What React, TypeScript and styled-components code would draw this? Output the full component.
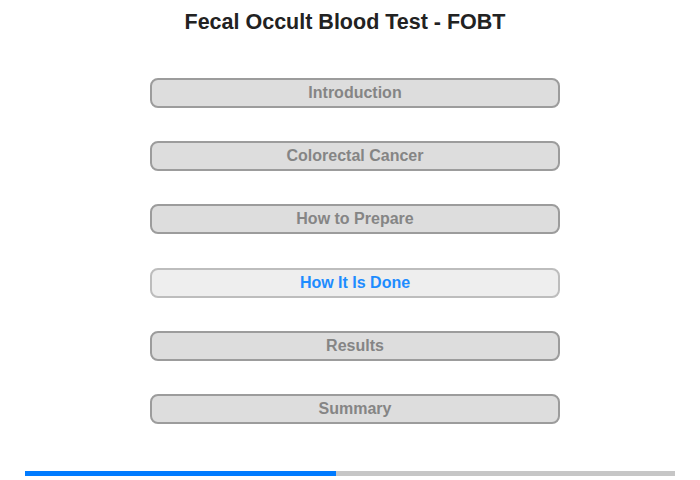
import React from 'react';
import styled, { createGlobalStyle } from 'styled-components';

const GlobalStyle = createGlobalStyle`
  html, body {
    margin: 0;
    padding: 0;
    background: #fff;
    font-family: "Liberation Sans", Arial, sans-serif;
  }
`;

const Page = styled.div`
  width: 700px;
  height: 480px;
  display: flex;
  flex-direction: column;
  align-items: center;
`;

const Title = styled.h1`
  margin: 9px 10px 0 0;
  height: 26px;
  font-size: 21.5px;
  line-height: 26px;
  font-weight: bold;
  color: #222;
`;

const Menu = styled.nav`
  margin: 43px 0 0 10px;
  display: flex;
  flex-direction: column;
  gap: 33.2px;
`;

const MenuButton = styled.div<{ $active?: boolean }>`
  box-sizing: border-box;
  width: 410px;
  height: 30px;
  border: 2px solid ${(p) => (p.$active ? '#bdbdbd' : '#9c9c9c')};
  border-radius: 8px;
  background: ${(p) => (p.$active ? '#eeeeee' : '#dddddd')};
  color: ${(p) => (p.$active ? '#1e8cff' : '#858585')};
  font-size: 16px;
  font-weight: bold;
  display: flex;
  align-items: center;
  justify-content: center;
  cursor: pointer;
`;

const Progress = styled.div`
  margin-top: auto;
  margin-bottom: 4px;
  width: 650px;
  height: 5px;
  background: #c6c6c6;
  display: flex;
`;

const ProgressFill = styled.div`
  height: 100%;
  background: #007bff;
`;

const items = [
  'Introduction',
  'Colorectal Cancer',
  'How to Prepare',
  'How It Is Done',
  'Results',
  'Summary',
];

export default function App() {
  const current = 3;
  const progress = 311 / 650;

  return (
    <>
      <GlobalStyle />
      <Page>
        <Title>Fecal Occult Blood Test - FOBT</Title>
        <Menu>
          {items.map((item, i) => (
            <MenuButton key={item} $active={i === current}>
              {item}
            </MenuButton>
          ))}
        </Menu>
        <Progress>
          <ProgressFill style={{ width: `${progress * 100}%` }} />
        </Progress>
      </Page>
    </>
  );
}
